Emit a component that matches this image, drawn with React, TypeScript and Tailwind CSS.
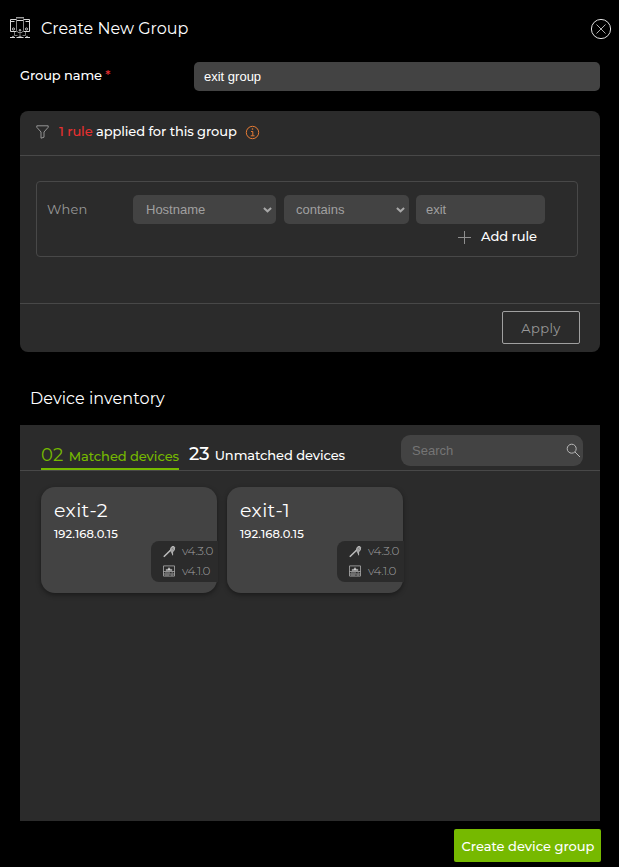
import React from "react";

const ServerIcon = () => (
  <svg width="22" height="23" viewBox="0 0 22 23" fill="none" stroke="#d8d8d8" strokeWidth="1">
    <path d="M7.5 14.5h-6v-12h6M14.5 14.5h6v-12h-6" />
    <path d="M1.5 4.5h4M16.5 4.5h4M7 .8h8M7 3.5h8" />
    <path d="M7.5 1.5v12l1.5 2h4l1.5-2v-12" stroke="#8a8a8a" />
    <path d="M5.5 15v3.5h3M16.5 15v3.5h-3M11 15.5v4" stroke="#858585" strokeWidth="0.9" />
    <circle cx="4.5" cy="12" r="1.1" strokeWidth="0.9" />
    <circle cx="17.5" cy="12" r="1.1" strokeWidth="0.9" />
    <circle cx="11" cy="13.3" r="0.8" />
    <path d="M1 20.5h5M7.5 20.5h7M16 20.5h5" />
    <path d="M3 19.4h2M9.5 19.4h3M17 19.4h2" strokeWidth="0.7" />
  </svg>
);

const CloseIcon = () => (
  <svg width="22" height="22" viewBox="0 0 22 22" fill="none" stroke="#e0e0e0" strokeWidth="1">
    <circle cx="11" cy="11" r="9.6" />
    <path d="M6.5 6.5l9 9M15.5 6.5l-9 9" stroke="#b0b0b0" />
  </svg>
);

const Chevron = () => (
  <svg width="9" height="6" viewBox="0 0 9 6" fill="none" stroke="#a8a8a8" strokeWidth="2">
    <path d="M.9 1.1l3.6 3.2 3.6-3.2" />
  </svg>
);

const ToolIcon = () => (
  <svg width="13" height="13" viewBox="0 0 13 13" fill="none" stroke="#bdbdbd">
    <path d="M.8 11.8L7.5 5.2" strokeWidth="1.5" />
    <path d="M7.2 6L8 2.5 10 1.2l1.7 1-.4 2.8-1.7 2v3.3" fill="#a0a0a0" strokeWidth="0.9" />
    <path d="M9.2 3.4l1 1" stroke="#555" strokeWidth="0.8" />
  </svg>
);

const DeviceIcon = () => (
  <svg width="12" height="12" viewBox="0 0 12 12" fill="none" stroke="#adadad">
    <path d="M.5.9h11v10.2H.5zM.5 6.5h11M.5 9h11" strokeWidth="0.8" />
    <path d="M3 5.6V4.4h1.5L6 2.6l1.5 1.8H9v1.2z" fill="#d0d0d0" strokeWidth="0.5" />
    <path d="M2 7.8h5M8.5 7.8h1.5M2 10.1h4M8 10.1h2" strokeWidth="0.6" />
  </svg>
);

const DeviceCard = ({ name }: { name: string }) => (
  <div className="flex h-[106px] w-[176px] flex-col rounded-[14px] bg-[#434343] shadow-[0_2px_5px_rgba(0,0,0,0.4)]">
    <div className="mt-[11px] pl-[13px] text-[19px] leading-[26px] tracking-[0.4px] text-white">{name}</div>
    <div className="mt-[2px] pl-[13px] text-[11.5px] font-medium leading-[16px] tracking-[0.1px] text-white">192.168.0.15</div>
    <div className="-mt-px ml-[110px] flex h-[41px] w-[67px] flex-col rounded-l-[8px] bg-[#2b2b2b] pl-3 text-[12px] text-[#a0a0a0]">
      <div className="flex h-[20px] items-center gap-[6px]"><ToolIcon /><span className="font-light tracking-[-0.45px]">v4.3.0</span></div>
      <div className="flex h-[20px] items-center gap-[7px]"><DeviceIcon /><span className="font-light tracking-[-0.5px]">v4.1.0</span></div>
    </div>
  </div>
);

export default function App() {
  return (
    <div className="flex h-[867px] w-[619px] flex-col overflow-hidden bg-black font-[Montserrat,Inter,sans-serif] text-[13px] text-white">
      <header className="flex h-[57px] items-center pl-[9px] pr-[7px]">
        <ServerIcon />
        <h1 className="ml-[10px] flex-1 text-[16px]">Create New Group</h1>
        <CloseIcon />
      </header>

      <div className="mt-[5px] flex h-[29px] pl-5">
        <label className="w-[174px] pt-[4px] font-medium leading-[18px] tracking-[-0.1px]">
          Group name <span className="text-[#e83030]">*</span>
        </label>
        <div className="flex w-[406px] items-center rounded-[5px] bg-[#434343] pl-[10px] font-['Liberation_Sans',sans-serif] text-[13px]">exit group</div>
      </div>

      <section className="ml-5 mt-5 flex h-[241px] w-[580px] flex-col rounded-lg bg-[#2b2b2b]">
        <div className="flex h-[45px] items-center border-b border-[#484848] pb-[2px] pl-4">
          <svg width="13" height="14" viewBox="0 0 13 14" fill="none" stroke="#a0a0a0" strokeWidth="0.9">
            <path d="M.8.8h11.4v1.5L8 7v5.2l-3 1V7L.8 2.3z" />
          </svg>
          <div className="ml-[10px] w-[178px] whitespace-nowrap font-medium tracking-[-0.08px]"><span className="text-[#e83030]">1 rule</span> applied for this group</div>
          <svg className="ml-[8px] mt-px" width="15" height="15" viewBox="0 0 15 15" fill="none" stroke="#e57b35" strokeWidth="1">
            <circle cx="7.5" cy="7.5" r="6.2" />
            <path d="M6 6.5h1.8v4M5.7 10.8h3.8" />
            <circle cx="7.5" cy="4" r=".8" fill="#e57b35" stroke="none" />
          </svg>
        </div>
        <div className="ml-4 mt-[25px] flex h-[76px] w-[542px] flex-col rounded-[4px] border border-[#484848] pt-[13px]">
          <div className="flex h-[29px] items-center pl-[10px] font-['Liberation_Sans',sans-serif] text-[13px] text-[#a0a0a0]">
            <span className="w-[86px] font-[Montserrat,Inter,sans-serif] tracking-[0.2px] text-[#999]">When</span>
            <div className="flex h-full w-[143px] items-center justify-between rounded-[5px] bg-[#434343] pl-[13px] pr-1">Hostname<Chevron /></div>
            <div className="ml-2 flex h-full w-[125px] items-center justify-between rounded-[5px] bg-[#434343] pl-3 pr-1">contains<Chevron /></div>
            <div className="ml-[7px] flex h-full w-[129px] items-center rounded-[5px] bg-[#434343] pl-[10px]">exit</div>
          </div>
          <div className="mt-[3px] flex h-5 items-center pl-[421px]">
            <svg width="13" height="13" viewBox="0 0 13 13" stroke="#8f8f8f"><path d="M0 6.5h13M6.5 0v13" /></svg>
            <span className="ml-[10px] font-medium tracking-[-0.06px]">Add rule</span>
          </div>
        </div>
        <div className="mt-[46px] flex flex-1 justify-end border-t border-[#484848] pr-5 pt-[7px]">
          <button className="h-[33px] w-[78px] rounded-[2px] border border-[#a0a0a0] pt-[2px] tracking-[0.4px] text-[#999]">Apply</button>
        </div>
      </section>

      <h2 className="ml-[30px] mt-[35px] text-[16px] leading-[24px] tracking-[0.08px]">Device inventory</h2>

      <section className="ml-5 mt-[14px] h-[396px] w-[580px] bg-[#2b2b2b]">
        <div className="flex h-[46px] border-b border-[#484848] pl-[21px]">
          <div className="mt-[18px] flex h-[27px] w-[138px] items-baseline justify-between whitespace-nowrap border-b-2 border-[#76b900] leading-[24px] text-[#76b900]">
            <span className="text-[18px]">02</span><span className="font-medium tracking-[-0.06px]">Matched devices</span>
          </div>
          <div className="ml-[10px] mt-[17px] flex h-6 w-[156px] items-baseline justify-between whitespace-nowrap leading-[24px]">
            <span className="text-[18px] font-medium tracking-[-0.2px]">23</span><span className="font-medium tracking-[-0.08px]">Unmatched devices</span>
          </div>
          <div className="ml-14 mt-[10px] flex h-[31px] w-[182px] items-center justify-between rounded-[9px] bg-[#434343] pl-[11px] pr-[2px] font-['Liberation_Sans',sans-serif] text-[13px] text-[#757575]">
            Search
            <svg width="15" height="15" viewBox="0 0 15 15" fill="none" stroke="#b8b8b8"><circle cx="5.7" cy="5.7" r="4.5" /><path d="M9 9l5 5" /></svg>
          </div>
        </div>
        <div className="flex gap-[10px] pl-[21px] pt-4">
          <DeviceCard name="exit-2" />
          <DeviceCard name="exit-1" />
        </div>
      </section>

      <button className="ml-[454px] mt-2 h-[33px] w-[147px] whitespace-nowrap rounded-[2px] bg-[#76b900] pl-px pt-[2px] font-medium">Create device group</button>
    </div>
  );
}
